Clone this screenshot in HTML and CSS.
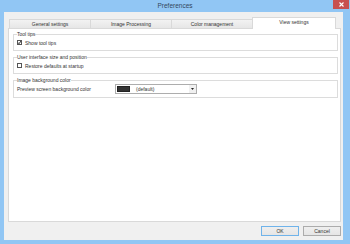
FILE: index.html
```html
<!DOCTYPE html>
<html>
<head>
<meta charset="utf-8">
<link rel="stylesheet" href="styles.css">
</head>
<body>
<div class="window">
  <div class="titlebar">
    <span></span>
    <span class="title">Preferences</span>
    <span class="close-wrap"><span class="close"><svg width="5" height="5" viewBox="0 0 5 5"><path d="M0.5 0.5L4.5 4.5M4.5 0.5L0.5 4.5" stroke="#fff" stroke-width="1.1"/></svg></span></span>
  </div>
  <div class="client">
    <div class="tabs">
      <div class="tab">General settings</div>
      <div class="tab">Image Processing</div>
      <div class="tab">Color management</div>
      <div class="tab active">View settings</div>
    </div>
    <div class="panel">
      <fieldset class="group">
        <legend>Tool tips</legend>
        <label class="row"><span class="check"><svg width="5" height="5" viewBox="0 0 5 5"><path d="M0.8 2.4L2 3.7L4.2 0.9" stroke="#222" stroke-width="1" fill="none"/></svg></span>Show tool tips</label>
      </fieldset>
      <fieldset class="group">
        <legend>User interface size and position</legend>
        <label class="row"><span class="check"></span>Restore defaults at startup</label>
      </fieldset>
      <fieldset class="group">
        <legend>Image background color</legend>
        <div class="row color-row">
          <span class="row-label">Preview screen background color</span>
          <div class="select">
            <span class="swatch"></span>
            <span class="select-text">(default)</span>
            <span class="arrow"><svg width="3" height="2" viewBox="0 0 3 2"><path d="M0 0H3L1.5 2Z" fill="#222"/></svg></span>
          </div>
        </div>
      </fieldset>
    </div>
    <div class="footer">
      <button class="btn default">OK</button>
      <button class="btn">Cancel</button>
    </div>
  </div>
</div>
</body>
</html>
```
FILE: styles.css
```css
html, body {
  margin: 0;
  padding: 0;
}
body {
  width: 350px;
  height: 244px;
  overflow: hidden;
  font-family: "Liberation Sans", Arial, sans-serif;
  color: #333;
}
.window {
  width: 350px;
  height: 244px;
  background: #91c6f4;
  display: flex;
  flex-direction: column;
  box-sizing: border-box;
}
.titlebar {
  height: 12px;
  display: grid;
  grid-template-columns: 1fr auto 1fr;
  align-items: start;
}
.title {
  font-size: 6.5px;
  line-height: 12px;
  color: #34475c;
}
.close-wrap {
  display: flex;
  justify-content: flex-end;
  padding-right: 1px;
}
.close {
  width: 16px;
  height: 9px;
  background: #c75050;
  display: flex;
  align-items: center;
  justify-content: center;
}
.client {
  flex: 1;
  background: #f0f0f0;
  margin: 0 7px 4px 4px;
  padding: 5px 0 0 4px;
  display: flex;
  flex-direction: column;
}
.tabs {
  display: flex;
  align-items: flex-end;
  height: 11px;
  padding-left: 1px;
  position: relative;
  z-index: 1;
}
.tab {
  width: 82px;
  height: 9px;
  box-sizing: border-box;
  border: 1px solid #d9d9d9;
  border-bottom: none;
  margin-right: -1px;
  background: linear-gradient(#f2f2f2, #e6e6e6);
  font-size: 5px;
  line-height: 8px;
  text-align: center;
  color: #333;
}
.tab.active {
  height: 12px;
  width: 84px;
  margin-bottom: -1px;
  background: #fff;
  line-height: 9px;
  padding-bottom: 2px;
}
.panel {
  height: 194px;
  width: 333px;
  box-sizing: border-box;
  border: 1px solid #d9d9d9;
  background: #fff;
  padding: 2px 2px 0 4px;
  display: flex;
  flex-direction: column;
  gap: 3px;
}
.group {
  margin: 0;
  border: 1px solid #dcdcdc;
  padding: 0 4px 3px 3px;
  min-width: 0;
}
.group legend {
  font-size: 5px;
  line-height: 7px;
  padding: 0;
  color: #333;
}
.row {
  display: flex;
  align-items: center;
  height: 9px;
  font-size: 5px;
  color: #333;
}
.check {
  width: 5px;
  height: 5px;
  box-sizing: border-box;
  border: 1px solid #555;
  background: #fff;
  margin-right: 3px;
  display: flex;
  align-items: center;
  justify-content: center;
  overflow: hidden;
}
.check svg {
  flex: none;
}
.color-row {
  height: 10px;
}
.row-label {
  width: 98px;
}
.select {
  width: 82px;
  height: 10px;
  box-sizing: border-box;
  border: 1px solid #adadad;
  background: #fff;
  display: flex;
  align-items: center;
  padding-left: 1px;
}
.swatch {
  width: 13px;
  height: 6px;
  background: #333;
  border: 0.5px solid #222;
  box-sizing: border-box;
}
.select-text {
  flex: 1;
  margin-left: 6px;
}
.arrow {
  width: 7px;
  height: 8px;
  background: #f0f0f0;
  display: flex;
  align-items: center;
  justify-content: center;
}
.footer {
  display: flex;
  justify-content: flex-end;
  gap: 4px;
  padding: 4px 2px 0 0;
}
.btn {
  width: 38px;
  height: 10px;
  box-sizing: border-box;
  border: 1px solid #acacac;
  background: linear-gradient(#efefef, #e5e5e5);
  font-family: "Liberation Sans", Arial, sans-serif;
  font-size: 5px;
  line-height: 8px;
  padding: 0;
  color: #333;
}
.btn.default {
  border-color: #6fb3ea;
}
```
